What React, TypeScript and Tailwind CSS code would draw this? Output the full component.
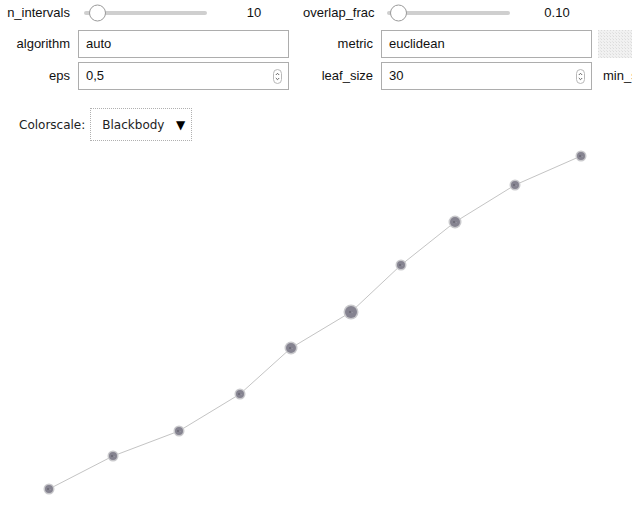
import React from 'react'

type Node = { x: number; y: number; r: number }

const nodes: Node[] = [
  { x: 49, y: 489, r: 5 },
  { x: 113, y: 456, r: 5 },
  { x: 179, y: 431, r: 5 },
  { x: 240, y: 394, r: 5 },
  { x: 291, y: 348, r: 6 },
  { x: 351, y: 312, r: 7 },
  { x: 401, y: 265, r: 5 },
  { x: 455, y: 222, r: 6 },
  { x: 515, y: 185, r: 5 },
  { x: 581, y: 156, r: 5 },
]

const Label = ({ children }: { children: React.ReactNode }) => (
  <span className="w-[70px] shrink-0 text-right text-[13px] text-[#111]">{children}</span>
)

const Slider = ({ label, value, pos }: { label: string; value: string; pos: number }) => (
  <div className="flex h-[26px] w-[303px] shrink-0 items-center">
    <Label>{label}</Label>
    <div className="relative ml-[14px] h-[4px] w-[123px] rounded-full bg-[#cfcfcf]">
      <div
        className="absolute top-1/2 h-[17px] w-[17px] -translate-y-1/2 rounded-full border border-[#9a9a9a] bg-white"
        style={{ left: pos }}
      />
    </div>
    <span className="w-[94px] text-center text-[13px] text-[#111]">{value}</span>
  </div>
)

const Spinner = () => (
  <svg width="9" height="15" viewBox="0 0 9 15" className="shrink-0">
    <rect x="0.5" y="0.5" width="8" height="14" rx="4" fill="white" stroke="#b8b8b8" />
    <path d="M2.8 6 L4.5 4.3 L6.2 6" fill="none" stroke="#555" strokeWidth="0.9" />
    <path d="M2.8 9 L4.5 10.7 L6.2 9" fill="none" stroke="#555" strokeWidth="0.9" />
  </svg>
)

const Field = ({ label, value, spin }: { label: string; value: string; spin?: boolean }) => (
  <div className="flex h-[28px] w-[303px] shrink-0 items-center">
    <Label>{label}</Label>
    <div className="ml-2 flex h-[28px] w-[211px] items-center justify-between border border-[#adadad] bg-white pl-[7px] pr-[6px] text-[13px] text-[#111]">
      <span>{value}</span>
      {spin ? <Spinner /> : null}
    </div>
  </div>
)

export default function App() {
  return (
    <div className="h-[506px] w-[632px] overflow-hidden bg-white font-['Liberation_Sans',Arial,sans-serif]">
      <div className="flex whitespace-nowrap">
        <Slider label="n_intervals" value="10" pos={5} />
        <Slider label="overlap_frac" value="0.10" pos={3} />
      </div>
      <div className="mt-[4px] flex whitespace-nowrap">
        <Field label="algorithm" value="auto" />
        <Field label="metric" value="euclidean" />
        <svg width="34" height="28" className="ml-[-8px] shrink-0">
          <defs>
            <pattern id="hatch" width="3" height="3" patternUnits="userSpaceOnUse">
              <rect width="3" height="3" fill="#f1f1f1" />
              <rect width="1" height="1" fill="#dcdcdc" />
              <rect x="2" y="2" width="1" height="1" fill="#e4e4e4" />
            </pattern>
          </defs>
          <rect width="34" height="28" fill="url(#hatch)" />
        </svg>
      </div>
      <div className="mt-[4px] flex overflow-hidden whitespace-nowrap">
        <Field label="eps" value="0,5" spin />
        <Field label="leaf_size" value="30" spin />
        <span className="ml-[-3px] shrink-0 self-center text-[13px] text-[#111]">min_samples</span>
      </div>
      <div className="mt-[18px] flex items-center pl-[19px] font-['DejaVu_Sans',Verdana,sans-serif] text-[12px] text-[#222]">
        <span>Colorscale:</span>
        <div className="ml-[5px] flex h-[33px] w-[102px] items-center justify-between border border-dotted border-[#b0b0b0] pl-[11px] pr-[6px]">
          <span>Blackbody</span>
          <span className="text-[12px] text-black">▼</span>
        </div>
      </div>
      <svg width="632" height="365" viewBox="0 141 632 365" className="block">
        <polyline
          points={nodes.map(n => `${n.x},${n.y}`).join(' ')}
          fill="none"
          stroke="#c4c4c4"
          strokeWidth="1"
        />
        {nodes.map(n => (
          <g key={`${n.x}-${n.y}`}>
            <circle cx={n.x} cy={n.y} r={n.r + 0.5} fill="#c9c9cc" />
            <circle cx={n.x} cy={n.y} r={n.r - 1} fill="#858390" />
            <circle cx={n.x - 1} cy={n.y} r={0.8} fill="#55535c" />
            <circle cx={n.x + 1.2} cy={n.y + 0.6} r={0.6} fill="#9c9aa5" />
          </g>
        ))}
      </svg>
    </div>
  )
}
